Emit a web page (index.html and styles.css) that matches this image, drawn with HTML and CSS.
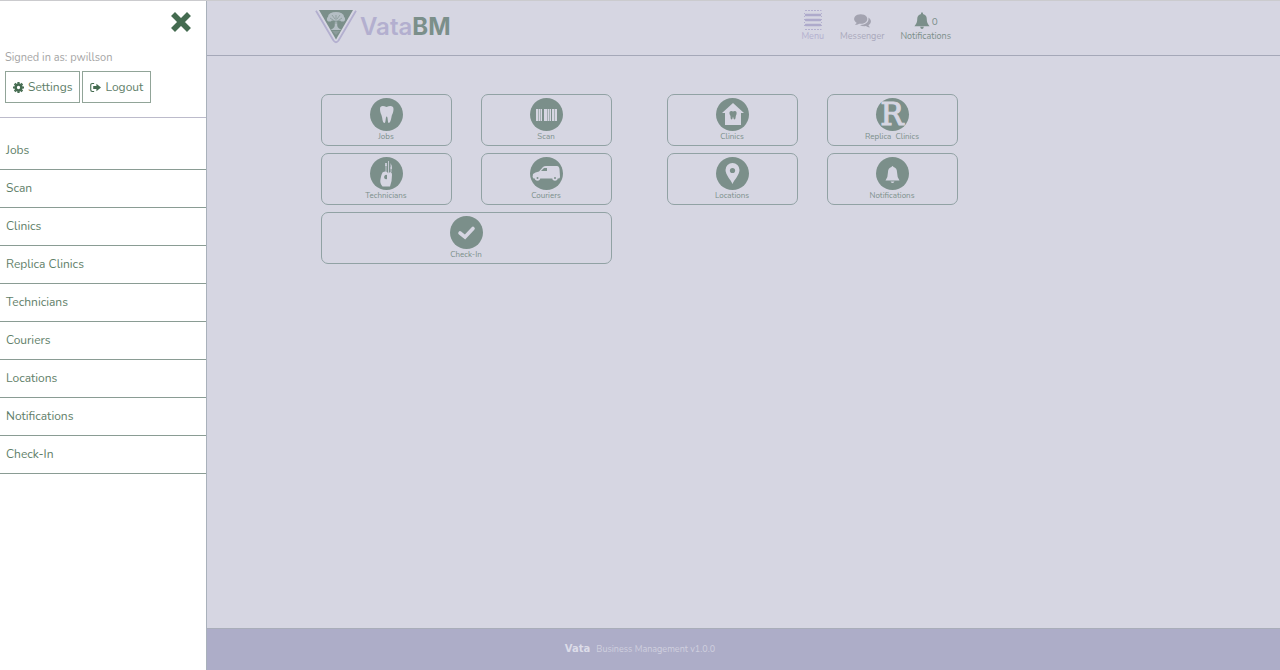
FILE: index.html
```html
<!DOCTYPE html>
<html lang="en">

<head>
  <meta charset="UTF-8">
  <meta name="viewport" content="width=device-width, initial-scale=1.0">
  <title>VataBM</title>
  <link rel="stylesheet" href="styles.css">
</head>

<body>
  <header class="header">
    <div class="header-inner">
      <a class="logo" href="#">
        <svg class="logo-mark" viewBox="0 0 42 34" aria-hidden="true">
          <path d="M1 .8L18.500 30.500Q21 34 23.500 30.500L41 .8" fill="none" stroke="#b3afcf" stroke-width="1.800" />
          <path d="M4 0H38L21 29.500Z" fill="#7b8f8a" />
          <g fill="#b4bec4">
            <ellipse cx="21" cy="6.500" rx="8" ry="4.500" />
            <circle cx="14.500" cy="9" r="2.600" />
            <circle cx="27.500" cy="9" r="2.600" />
            <path d="M20 10H22L22.300 16Q23 18.500 27 20H15Q19 18.500 19.700 16Z" />
            <path d="M17 21H25L21 25Z" opacity=".3" />
          </g>
          <path d="M21 14V5M21 12L15 8M21 12L27 8M17 5L20 9M25 5L22 9" stroke="#7b8f8a" stroke-width=".6" fill="none" />
        </svg>
        <span class="logo-text">Vata<b>BM</b></span>
      </a>
      <nav class="top-nav">
        <a class="nav-item" href="#">
          <span class="nav-icon">
            <svg width="18" height="20" viewBox="0 0 18 20" aria-hidden="true">
              <path d="M1 .5H17.500M1 19.500H17.500" stroke="#b3afcf" stroke-dasharray="2 1" />
              <path d="M.5 3V18M17.500 3V18" stroke="#b3afcf" stroke-dasharray="1 2" />
              <path d="M2 5H16M2 10H16M2 15H16" stroke="#aeaacb" stroke-width="2.400" stroke-linecap="round" />
            </svg>
          </span>
          Menu
        </a>
        <a class="nav-item messenger" href="#">
          <span class="nav-icon">
            <svg width="17" height="15" viewBox="0 0 1792 1600" aria-hidden="true">
              <path fill="#a3a3b0" d="M1408 640q0 139-94 257t-256.500 186.500-353.500 68.500q-86 0-176-16-124 88-278 128-36 9-86 16h-3q-11 0-20.500-8t-11.500-21q-1-3-1-6.500t.5-6.500 2-6l2.500-5 3.500-5.500 4-5 4.500-5 4-4.500q5-6 23-25t26-29.500 22.500-29 25-38.500 20.500-44q-124-72-195-177t-71-224q0-139 94-257t256.500-186.500 353.500-68.500 353.500 68.500 256.500 186.500 94 257zm384 256q0 120-71 224.500t-195 176.500q10 24 20.500 44t25 38.500 22.500 29 26 29.500 23 25q1 1 4 4.500t4.500 5 4 5 3.500 5.500l2.500 5 2 6 .5 6.500-1 6.500q-3 14-13 22t-22 7q-50-7-86-16-154-40-278-128-90 16-176 16-271 0-472-132 58 4 88 4 161 0 309-45t264-129q125-92 192-212t67-254q0-77-23-152 129 71 204 178t75 230z" />
            </svg>
          </span>
          Messenger
        </a>
        <a class="nav-item notifications" href="#">
          <span class="nav-icon">
            <svg width="16" height="17" viewBox="0 0 16 18" aria-hidden="true">
              <path fill="#7b8f8a" d="M7 2V1Q8-.5 9 1V2Q13 3 13 7C13 11 14 13 16 15H0C2 13 3 11 3 7Q3 3 7 2ZM6 15.500H10Q9.500 18 8 18T6 15.500Z" />
            </svg>
            <span class="count">0</span>
          </span>
          Notifications
        </a>
      </nav>
    </div>
  </header>

  <main class="main">
    <div class="group">
      <a class="tile" href="#">
        <svg class="tile-icon" viewBox="0 0 33 33" aria-hidden="true">
          <circle cx="16.500" cy="16.500" r="16.500" />
          <path class="light" d="M10 11C10 7.500 13 7.500 16.500 9C20 7.500 23.500 7.500 23.500 11C23.500 15 22 16 21.500 19C21 22 20 25 18.800 25C17.500 25 18 18.500 16.700 18.500S16 25 14.500 25S12.500 22 12 19C11.500 16 10 15 10 11Z" />
        </svg>
        Jobs
      </a>
      <a class="tile" href="#">
        <svg class="tile-icon" viewBox="0 0 33 33" aria-hidden="true">
          <circle cx="16.500" cy="16.500" r="16.500" />
          <path class="light" opacity=".45" d="M6 11H12V23H6ZM14 11H21V23H14ZM22 11H27V23H22Z" />
          <path class="light" d="M6 11H8V23H6ZM9 11H10V23H9ZM11 11H12V23H11ZM14 11H17V23H14ZM18 11H19V23H18ZM20 11H21V23H20ZM22 11H24V23H22ZM25 11H27V23H25Z" />
        </svg>
        Scan
      </a>
      <a class="tile" href="#">
        <svg class="tile-icon" viewBox="0 0 33 33" aria-hidden="true">
          <circle cx="16.500" cy="16.500" r="16.500" />
          <path class="light" d="M12.500 29.500Q9.500 26 10.500 22Q11 18 12.500 15.500Q15 14 17 15L18.500 16.500L20 15Q22 15 22 18Q22 25 20 29.500Z" />
          <path class="line" d="M16 15V8M18.500 19V4M21 15V10" stroke-width=".8" />
          <path class="light" d="M15 6H17V9H15ZM20.500 6L22 9V12H20.500Z" opacity=".8" />
          <path d="M14 20Q15 17 17 18V22Q14.500 23 14 20Z" />
        </svg>
        Technicians
      </a>
      <a class="tile" href="#">
        <svg class="tile-icon" viewBox="0 0 33 33" aria-hidden="true">
          <circle cx="16.500" cy="16.500" r="16.500" />
          <path class="light" d="M3 17Q5 15 9 14.500L13 10Q14 9 16 9H27Q29 9 29.500 12L30 20Q30 21.500 28 21.500H3.500Q2 20 3 17Z" />
          <circle class="light" cx="7.500" cy="21" r="2.700" />
          <circle class="light" cx="25" cy="21" r="2.700" />
          <circle cx="7.500" cy="21" r="1" />
          <circle cx="25" cy="21" r="1" />
          <path d="M11 14L14 11H17V14Z" />
        </svg>
        Couriers
      </a>
      <a class="tile wide" href="#">
        <svg class="tile-icon" viewBox="0 0 33 33" aria-hidden="true">
          <circle cx="16.500" cy="16.500" r="16.500" />
          <path d="M10 17L15 21L23 12.500" fill="none" stroke="#d6d6e2" stroke-width="3.600" stroke-linecap="round" />
        </svg>
        Check-In
      </a>
    </div>
    <div class="group">
      <a class="tile" href="#">
        <svg class="tile-icon" viewBox="0 0 33 33" aria-hidden="true">
          <circle cx="16.500" cy="16.500" r="16.500" />
          <path class="light" d="M17 5L28 15H25V27H9V15H6Z" />
          <path d="M13.500 14Q15 12.500 17 13.500Q19.500 12.500 20.500 14Q21 16 19.800 18Q19.500 21.500 18.500 21.500T17 18.500Q16.500 21.500 15.500 21.500T14.500 18Q13 16 13.500 14Z" />
        </svg>
        Clinics
      </a>
      <a class="tile" href="#">
        <span class="tile-icon letter">R</span>
        Replica &nbsp;Clinics
      </a>
      <a class="tile" href="#">
        <svg class="tile-icon" viewBox="0 0 33 33" aria-hidden="true">
          <circle cx="16.500" cy="16.500" r="16.500" />
          <path class="light" d="M16.500 27C15 23 9.500 18 9.500 13A7 7 0 0 1 23.500 13C23.500 18 18 23 16.500 27Z" />
          <circle cx="16.500" cy="13.500" r="2.600" />
        </svg>
        Locations
      </a>
      <a class="tile" href="#">
        <svg class="tile-icon" viewBox="0 0 33 33" aria-hidden="true">
          <circle cx="16.500" cy="16.500" r="16.500" />
          <path class="light" d="M15.500 10Q16.500 8 17.500 10Q21 11 21 15Q21 20 23.500 23.500H9.500Q12 20 12 15Q12 11 15.500 10ZM14.500 24.500H18.500Q16.500 27.500 14.500 24.500Z" />
        </svg>
        Notifications
      </a>
    </div>
  </main>

  <footer class="footer">
    <strong class="brand">Vata</strong>
    <span>Business Management v1.0.0</span>
  </footer>

  <aside class="sidebar">
    <div class="sidebar-top">
      <button class="close" type="button" aria-label="Close menu">
        <svg width="20" height="20" viewBox="0 0 20 20" aria-hidden="true">
          <path d="M4 4L16 16M16 4L4 16" stroke="#446b50" stroke-width="5.600" stroke-linecap="square" stroke-linejoin="round" />
        </svg>
      </button>
      <p class="signed-in">Signed in as: pwillson</p>
      <div class="actions">
        <button class="action" type="button">
          <svg width="11" height="11" viewBox="0 0 12 12" aria-hidden="true">
            <circle cx="6" cy="6" r="3.200" fill="none" stroke="#446b50" stroke-width="2.800" />
            <path d="M6 0V2M6 10V12M0 6H2M10 6H12M1.800 1.800L3 3M9 9L10.200 10.200M10.200 1.800L9 3M3 9L1.800 10.200" stroke="#446b50" stroke-width="2.400" />
          </svg>
          Settings
        </button>
        <button class="action" type="button">
          <svg width="11" height="11" viewBox="0 0 12 12" aria-hidden="true">
            <path d="M4.500 1.700H2.500Q.8 1.700 .8 3.500V8.500Q.8 10.300 2.500 10.300H4.500" fill="none" stroke="#446b50" stroke-width="1.200" />
            <path d="M3.500 4.300H7V1.800L12 6L7 10.200V7.700H3.500Z" fill="#446b50" />
          </svg>
          Logout
        </button>
      </div>
    </div>
    <nav class="menu">
      <a href="#">Jobs</a>
      <a href="#">Scan</a>
      <a href="#">Clinics</a>
      <a href="#">Replica Clinics</a>
      <a href="#">Technicians</a>
      <a href="#">Couriers</a>
      <a href="#">Locations</a>
      <a href="#">Notifications</a>
      <a href="#">Check-In</a>
    </nav>
  </aside>
</body>

</html>
```
FILE: styles.css
```css
* {
  box-sizing: border-box;
  margin: 0;
  padding: 0;
}

body {
  display: flex;
  flex-direction: column;
  min-height: 100vh;
  background-color: #d6d6e2;
  border-top: 1px solid #cbcbce;
  font-family: Nunito, Lato, sans-serif;
  color: #7b8f8a;
}

a {
  color: inherit;
  text-decoration: none;
}

svg {
  flex: none;
}

/* header */
.header {
  border-bottom: 1px solid #a5a8b8;
}

.header-inner {
  display: flex;
  justify-content: space-between;
  align-items: flex-start;
  max-width: 650px;
  height: 54px;
  margin: 0 auto;
  padding: 8px 14px 0 0;
}

.logo {
  display: flex;
  align-items: center;
  gap: 3px;
}

.logo-mark {
  width: 42px;
  height: 34px;
}

.logo-text {
  font-family: Inter, sans-serif;
  font-size: 24px;
  line-height: 36px;
  font-weight: 600;
  color: #b3afcf;
}

.logo-text b {
  font-weight: 700;
  color: #7b8f8a;
}

.top-nav {
  display: flex;
  gap: 16px;
}

.nav-item {
  display: flex;
  flex-direction: column;
  align-items: center;
  font-size: 9px;
  line-height: 11px;
  color: #b3afcf;
}

.nav-icon {
  display: flex;
  align-items: center;
  gap: 2px;
  height: 22px;
}

.messenger {
  color: #a9a8bb;
}

.notifications {
  color: #7b8f8a;
}

.count {
  padding-top: 4px;
  font-size: 10px;
}

/* tiles */
.main {
  flex: 1;
  display: flex;
  justify-content: center;
  align-items: flex-start;
  gap: 55px;
  padding: 38px 2px 0 0;
}

.group {
  display: grid;
  grid-template-columns: 131px 131px;
  gap: 7px 29px;
}

.tile {
  display: flex;
  flex-direction: column;
  align-items: center;
  padding: 3px 0 2px;
  border: 1px solid #91a2a4;
  border-radius: 7px;
  font-size: 8px;
  line-height: 12px;
}

.wide {
  grid-column: span 2;
}

.tile-icon {
  width: 33px;
  height: 33px;
  fill: #7b8f8a;
}

.tile-icon .light {
  fill: #d6d6e2;
}

.tile-icon .line {
  fill: none;
  stroke: #d6d6e2;
}

.letter {
  border-radius: 50%;
  background-color: #7b8f8a;
  color: #d6d6e2;
  font: 31px/33px "DejaVu Serif", serif;
  -webkit-text-stroke: 1px #d6d6e2;
  text-align: center;
}

/* footer */
.footer {
  display: flex;
  justify-content: center;
  align-items: center;
  gap: 6px;
  height: 42px;
  padding-bottom: 2px;
  background-color: #adadc8;
  border-top: 1px solid #a9adb9;
  font-size: 9px;
  color: #d0d0df;
}

.brand {
  font-family: "DejaVu Sans", sans-serif;
  font-size: 10px;
  color: #dcdce8;
}

/* slide-out menu, lies over the page */
.sidebar {
  position: fixed;
  top: 1px;
  left: 0;
  bottom: 0;
  width: 207px;
  background-color: #fff;
  border-right: 1px solid #a9b1bb;
}

.sidebar-top {
  display: flex;
  flex-direction: column;
  padding: 11px 5px 14px;
  border-bottom: 1px solid #bcbbcb;
}

button {
  border: none;
  background: none;
  font-family: inherit;
  color: #5f8069;
  cursor: pointer;
}

.close {
  align-self: flex-end;
  height: 20px;
  margin-right: 10px;
}

.signed-in {
  margin: 18px 0 6px;
  font-size: 11px;
  line-height: 15px;
  color: #a5a5a5;
}

.actions {
  display: flex;
  gap: 2px;
}

.action {
  display: flex;
  align-items: center;
  gap: 4px;
  height: 32px;
  padding: 0 7px;
  border: 1px solid #91a498;
  font-size: 12px;
}

.menu {
  padding-top: 14px;
}

.menu a {
  display: block;
  padding: 9px 6px 10px;
  border-bottom: 1px solid #8a9c94;
  font-size: 12px;
  line-height: 18px;
  color: #5f8069;
}
```
